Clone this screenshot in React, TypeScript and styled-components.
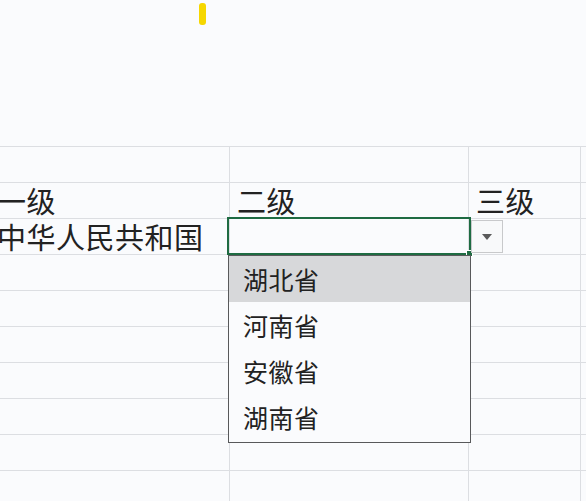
import styled, { createGlobalStyle } from "styled-components";

const GlobalStyle = createGlobalStyle`
  html, body {
    margin: 0;
    padding: 0;
    background: #fafbfd;
  }
  body {
    font-family: "Noto Sans CJK SC", "Noto Sans", sans-serif;
    overflow: hidden;
  }
`;

const Page = styled.div`
  width: 586px;
  height: 501px;
  overflow: hidden;
  background: #fafbfd;
`;

const TopArea = styled.div`
  height: 146px;
  box-sizing: border-box;
  padding: 3px 0 0 199px;
`;

const Marker = styled.div`
  width: 7px;
  height: 22px;
  border-radius: 3px;
  background: #f6d700;
`;

const Sheet = styled.div`
  display: grid;
  grid-template-columns: 240px 239px 112px 1fr;
  grid-auto-rows: 36px;
  margin-left: -10px;
  border-top: 1px solid #dcdee2;
`;

const Cell = styled.div<{ $active?: boolean }>`
  position: relative;
  box-sizing: border-box;
  border-right: 1px solid #dcdee2;
  border-bottom: 1px solid #dcdee2;
  display: flex;
  align-items: flex-end;
  padding: 0 0 3px 7px;
  font-size: 29px;
  letter-spacing: 0.5px;
  line-height: 1;
  color: #222222;
  white-space: nowrap;
  z-index: ${(p) => (p.$active ? 2 : "auto")};
`;

const Selection = styled.div`
  position: absolute;
  left: -3px;
  right: -3px;
  top: -2px;
  bottom: -1px;
  border: 2px solid #1e6b42;
`;

const Handle = styled.div`
  position: absolute;
  right: -5px;
  bottom: -3px;
  width: 5px;
  height: 5px;
  background: #1e6b42;
  border: 1px solid #ffffff;
`;

const ArrowButton = styled.div`
  position: absolute;
  left: calc(100% + 3px);
  top: 1px;
  width: 32px;
  height: 33px;
  box-sizing: border-box;
  border: 1px solid #c8c9cb;
  background: #f8f9fa;
  display: flex;
  align-items: center;
  justify-content: center;
`;

const Triangle = styled.div`
  width: 0;
  height: 0;
  border-left: 5px solid transparent;
  border-right: 5px solid transparent;
  border-top: 6px solid #5a5a5a;
`;

const List = styled.div`
  position: absolute;
  left: -2px;
  top: 36px;
  width: 243px;
  height: 188px;
  box-sizing: border-box;
  border: 1px solid #58595b;
  background: #fafbfd;
  display: flex;
  flex-direction: column;
`;

const Item = styled.div<{ $hover?: boolean }>`
  height: 46px;
  display: flex;
  align-items: center;
  padding-left: 14px;
  font-size: 25px;
  line-height: 1;
  color: #222222;
  background: ${(p) => (p.$hover ? "#d7d8da" : "transparent")};
`;

const options = ["湖北省", "河南省", "安徽省", "湖南省"];

const rows: string[][] = [
  ["", "", "", ""],
  ["一级", "二级", "三级", ""],
  ["中华人民共和国", "", "", ""],
  ["", "", "", ""],
  ["", "", "", ""],
  ["", "", "", ""],
  ["", "", "", ""],
  ["", "", "", ""],
  ["", "", "", ""],
  ["", "", "", ""],
];

const App = () => {
  return (
    <Page>
      <GlobalStyle />
      <TopArea>
        <Marker />
      </TopArea>
      <Sheet>
        {rows.map((row, r) =>
          row.map((text, c) => {
            const active = r === 2 && c === 1;
            return (
              <Cell key={`${r}-${c}`} $active={active}>
                {text}
                {active && (
                  <>
                    <Selection />
                    <Handle />
                    <ArrowButton>
                      <Triangle />
                    </ArrowButton>
                    <List>
                      {options.map((o, i) => (
                        <Item key={o} $hover={i === 0}>
                          {o}
                        </Item>
                      ))}
                    </List>
                  </>
                )}
              </Cell>
            );
          })
        )}
      </Sheet>
    </Page>
  );
};

export default App;
